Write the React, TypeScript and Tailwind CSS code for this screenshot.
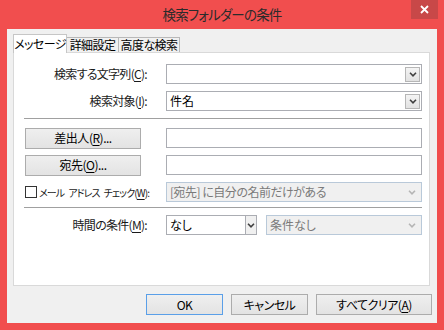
import React from "react";

const font = "font-['Meiryo_UI','Noto_Sans_CJK_JP',sans-serif] [font-feature-settings:'palt']";

const Chevron = ({ disabled = false }: { disabled?: boolean }) => (
  <svg width="8" height="5" viewBox="0 0 8 5">
    <path
      d="M1 0.8 L4 3.8 L7 0.8"
      fill="none"
      stroke={disabled ? "#b5b5b5" : "#404040"}
      strokeWidth="1.6"
    />
  </svg>
);

const Key = ({ k }: { k: string }) => (
  <>
    (<span className="underline underline-offset-2">{k}</span>)
  </>
);

const Label = ({ children }: { children: React.ReactNode }) => (
  <div className="w-[123px] shrink-0 whitespace-nowrap text-right text-[12px] tracking-[-0.7px] text-[#1a1a1a]">
    {children}
  </div>
);

const Combo = ({ value = "" }: { value?: string }) => (
  <div className="ml-[19px] flex h-[20px] flex-1 items-center border border-[#abadb3] bg-white pl-[3px] pr-[1px]">
    <span className="flex-1 text-[12px] text-black">{value}</span>
    <div className="flex h-[15px] w-[15px] items-center justify-center border border-[#b6b6b6] bg-gradient-to-b from-[#f4f4f4] to-[#e2e2e2]">
      <Chevron />
    </div>
  </div>
);

const TextBox = () => (
  <div className="ml-[19px] h-[20px] flex-1 border border-[#abadb3] bg-white" />
);

const Button = ({
  children,
  w,
  primary = false,
}: {
  children: React.ReactNode;
  w: string;
  primary?: boolean;
}) => (
  <button
    className={`${w} flex h-[21px] shrink-0 items-center justify-center whitespace-nowrap border bg-gradient-to-b from-[#efefef] to-[#e3e3e3] text-[12px] tracking-[-0.5px] text-black ${
      primary ? "border-[#5a9fe8]" : "border-[#acacac]"
    }`}
  >
    {children}
  </button>
);

export default function App() {
  return (
    <div className={`${font} flex h-[330px] w-[444px] flex-col bg-[#f14e4e]`}>
      {/* title bar */}
      <div className="relative flex h-[29px] shrink-0 items-center justify-center">
        <span className="pb-[1px] text-[13.5px] tracking-[-0.8px] text-[#2b2b2b]">検索フォルダーの条件</span>
        <div className="absolute right-[6px] top-0 flex h-[19px] w-[27px] items-center justify-center bg-[#c84848]">
          <svg width="9" height="9" viewBox="0 0 9 9">
            <path d="M1 1 L8 8 M8 1 L1 8" stroke="#fff" strokeWidth="1.8" />
          </svg>
        </div>
      </div>

      {/* client */}
      <div className="mx-[7px] flex h-[294px] flex-col bg-[#f0f0f0] pl-[6px] pr-[5px] pt-[5px]">
        {/* tabs */}
        <div className="flex h-[18px] items-end whitespace-nowrap text-[12px] tracking-[-0.6px]">
          <div className="relative z-10 -mb-[1px] flex h-[19px] w-[54px] items-center justify-center border border-b-0 border-[#c6c6c6] bg-white">
            メッセージ
          </div>
          <div className="flex h-[15px] w-[52px] items-center justify-center border border-b-0 border-l-0 border-[#b8b8b8] bg-[#f0f0f0]">
            詳細設定
          </div>
          <div className="flex h-[15px] w-[61px] items-center justify-center border border-b-0 border-l-0 border-[#b8b8b8] bg-[#f0f0f0]">
            高度な検索
          </div>
        </div>

        {/* panel */}
        <div className="mr-[2px] flex h-[234px] flex-col border border-[#d9d9d9] bg-white pl-[10px] pr-[7px] pt-[11px]">
          <div className="flex h-[20px] items-center">
            <Label>
              検索する文字列<Key k="C" />:
            </Label>
            <Combo />
          </div>
          <div className="mt-[7px] flex h-[20px] items-center">
            <Label>
              検索対象<Key k="I" />:
            </Label>
            <Combo value="件名" />
          </div>

          <div className="mt-[7px] h-px bg-[#a0a0a0]" />

          <div className="mt-[9px] flex h-[20px] items-center">
            <div className="w-[123px] shrink-0 pl-[1px]">
              <Button w="w-[116px]">
                差出人<Key k="R" />...
              </Button>
            </div>
            <TextBox />
          </div>
          <div className="mt-[7px] flex h-[20px] items-center">
            <div className="w-[123px] shrink-0 pl-[1px]">
              <Button w="w-[116px]">
                宛先<Key k="O" />...
              </Button>
            </div>
            <TextBox />
          </div>
          <div className="mt-[7px] flex h-[20px] items-center">
            <div className="flex w-[123px] shrink-0 items-center pl-[1px]">
              <div className="h-[12px] w-[12px] shrink-0 border border-[#333] bg-white" />
              <span className="ml-[2px] flex whitespace-nowrap text-[10px] tracking-[-0.9px] text-[#1a1a1a]">
                <span>メール</span>
                <span className="ml-[4px]">アドレス</span>
                <span className="ml-[4px]">
                  チェック<Key k="W" />:
                </span>
              </span>
            </div>
            <div className="ml-[19px] flex h-[20px] flex-1 items-center border border-[#b9c9d9] bg-[#f0f0f0] pl-[3px] pr-[2px]">
              <span className="flex-1 whitespace-nowrap text-[12px] tracking-[-0.5px] text-[#7a7a7a]">
                [宛先] に自分の名前だけがある
              </span>
              <div className="flex h-[15px] w-[15px] items-center justify-center">
                <Chevron disabled />
              </div>
            </div>
          </div>

          <div className="mt-[5px] h-px bg-[#a0a0a0]" />

          <div className="mt-[7px] flex h-[20px] items-center">
            <Label>
              時間の条件<Key k="M" />:
            </Label>
            <div className="ml-[19px] flex h-[20px] w-[91px] items-center border border-[#abadb3] bg-white pl-[3px]">
              <span className="flex-1 text-[12px] text-black">なし</span>
              <div className="flex h-[18px] w-[11px] items-center justify-center border-l border-[#abadb3] bg-[#f0f0f0]">
                <Chevron />
              </div>
            </div>
            <div className="ml-[9px] flex h-[20px] flex-1 items-center border border-[#b9c9d9] bg-[#f0f0f0] pl-[3px] pr-[2px]">
              <span className="flex-1 text-[12px] text-[#7a7a7a]">条件なし</span>
              <div className="flex h-[15px] w-[15px] items-center justify-center">
                <Chevron disabled />
              </div>
            </div>
          </div>
        </div>

        {/* footer buttons */}
        <div className="mt-[8px] flex justify-end gap-[8px]">
          <Button w="w-[77px]" primary>
            OK
          </Button>
          <Button w="w-[77px]">キャンセル</Button>
          <Button w="w-[116px]">
            すべてクリア<Key k="A" />
          </Button>
        </div>
      </div>
    </div>
  );
}
